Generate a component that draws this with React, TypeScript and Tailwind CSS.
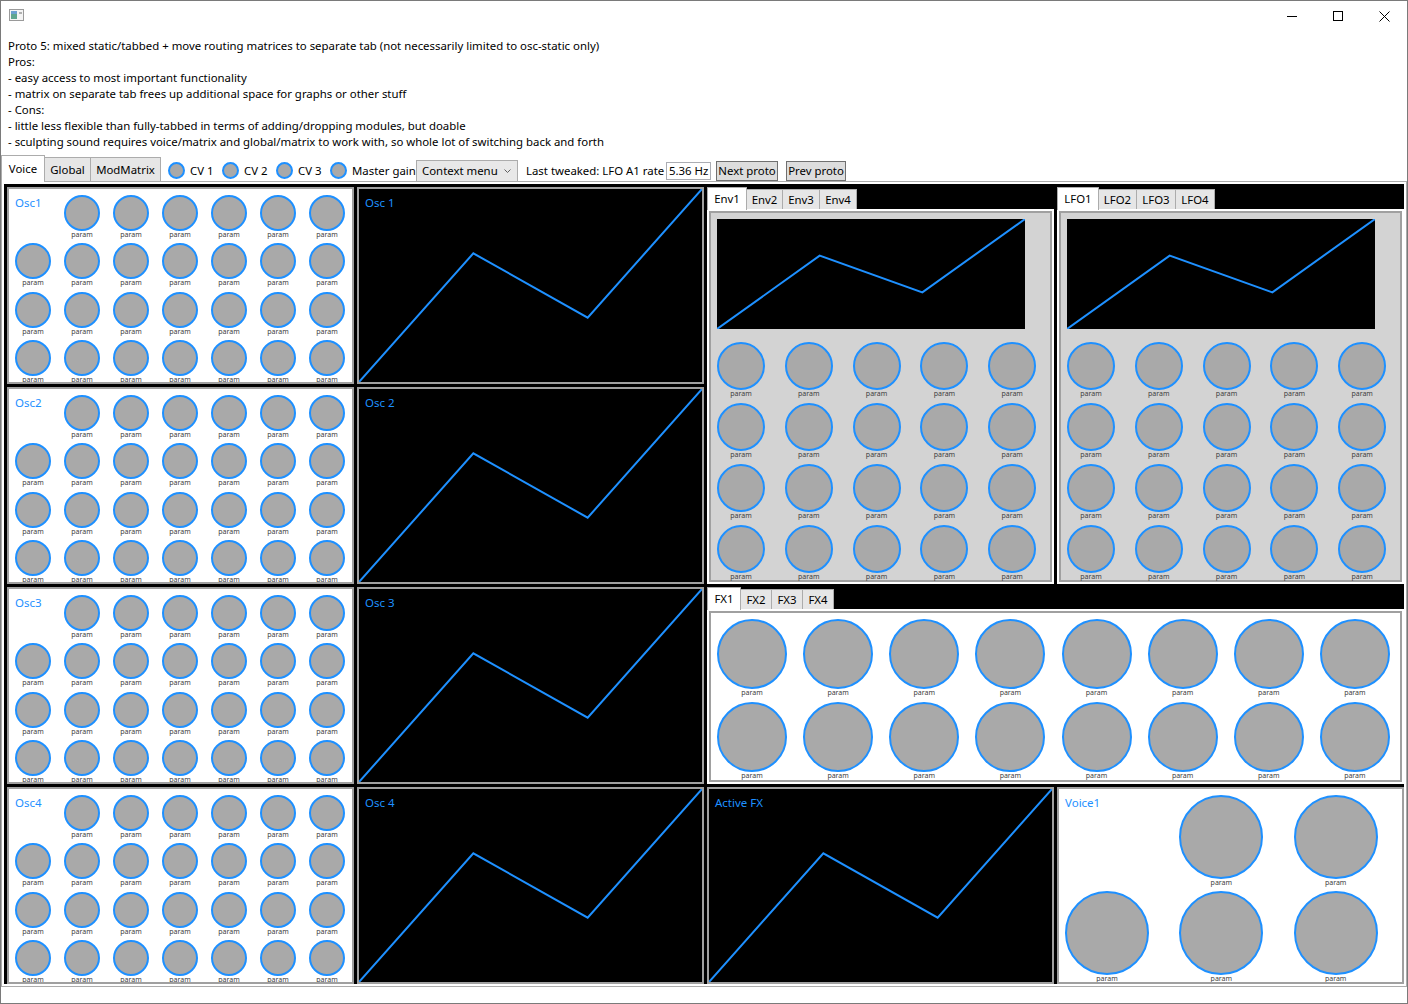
import React from "react";

type KS = "s" | "m" | "l" | "xl";

function Knob({ size }: { size: KS }) {
  const cls =
    size === "s"
      ? "w-[36px] h-[36px]"
      : size === "m"
      ? "w-[48px] h-[48px]"
      : size === "l"
      ? "w-[70px] h-[70px]"
      : "w-[84px] h-[84px]";
  return (
    <div className="flex pl-[6px] pt-[6px] min-w-0 min-h-0">
      <div className="flex flex-col items-center">
        <div className={`${cls} shrink-0 rounded-full border-2 border-[#1e90ff] bg-[#a9a9a9]`} />
        <span className="h-[7px] text-[7px] leading-[7px] text-[#404040]">param</span>
      </div>
    </div>
  );
}

function Line() {
  return (
    <svg className="absolute inset-0 h-full w-full" viewBox="0 0 300 300" preserveAspectRatio="none">
      <polyline
        points="0,300 100,100 200,200 300,0"
        fill="none"
        stroke="#1e90ff"
        strokeWidth="2"
        vectorEffect="non-scaling-stroke"
      />
    </svg>
  );
}

function Graph({ label, className = "" }: { label: string; className?: string }) {
  return (
    <div className={`relative overflow-hidden border-2 border-[#a0a0a0] bg-black ${className}`}>
      <Line />
      <span className="absolute left-[6px] top-[6px] text-[11.5px] leading-4 text-[#1e90ff]">{label}</span>
    </div>
  );
}

function OscPanel({ label }: { label: string }) {
  const cells = Array.from({ length: 27 });
  return (
    <div className="grid grid-cols-7 grid-rows-4 overflow-hidden border-2 border-[#a0a0a0] bg-white">
      <div className="pl-[6px] pt-[6px] text-[11.5px] leading-4 text-[#1e90ff]">{label}</div>
      {cells.map((_, i) => (
        <Knob key={i} size="s" />
      ))}
    </div>
  );
}

function InnerTab({ label, w, sel }: { label: string; w: string; sel?: boolean }) {
  return sel ? (
    <div
      className={`${w} relative z-10 mb-[-1px] flex h-[23px] items-center justify-center border border-b-0 border-[#acacac] bg-white text-black`}
    >
      {label}
    </div>
  ) : (
    <div
      className={`${w} -ml-px flex h-[20px] items-center justify-center border border-b-0 border-[#acacac] bg-[#e6e6e6] text-black`}
    >
      {label}
    </div>
  );
}

function EnvPanel({ tabs, widths }: { tabs: string[]; widths: string[] }) {
  return (
    <div className="row-span-2 flex flex-col bg-black">
      <div className="flex h-[22px] items-end">
        {tabs.map((t, i) => (
          <InnerTab key={t} label={t} w={widths[i]} sel={i === 0} />
        ))}
      </div>
      <div className="flex-1 bg-white p-[2px]">
        <div className="flex h-full flex-col border-2 border-[#a0a0a0] bg-[#d3d3d3]">
          <div className="relative ml-[6px] mt-[6px] h-[110px] w-[308px] shrink-0 bg-black">
            <Line />
          </div>
          <div className="mt-[7px] grid grid-cols-5 grid-rows-[61px_61px_61px_61px]">
            {Array.from({ length: 20 }).map((_, i) => (
              <Knob key={i} size="m" />
            ))}
          </div>
        </div>
      </div>
    </div>
  );
}

function FxPanel() {
  const tabs = ["FX1", "FX2", "FX3", "FX4"];
  const widths = ["w-[34px]", "w-[32px]", "w-[32px]", "w-[32px]"];
  return (
    <div className="col-span-2 flex flex-col bg-black">
      <div className="flex h-[22px] items-end">
        {tabs.map((t, i) => (
          <InnerTab key={t} label={t} w={widths[i]} sel={i === 0} />
        ))}
      </div>
      <div className="flex-1 bg-white p-[2px]">
        <div className="grid h-full grid-cols-8 grid-rows-[83px_83px] border-2 border-[#a0a0a0] bg-white">
          {Array.from({ length: 16 }).map((_, i) => (
            <Knob key={i} size="l" />
          ))}
        </div>
      </div>
    </div>
  );
}

function VoicePanel() {
  return (
    <div className="grid grid-cols-3 grid-rows-[96px_96px] overflow-hidden border-2 border-[#a0a0a0] bg-white">
      <div className="pl-[6px] pt-[6px] text-[11.5px] leading-4 text-[#1e90ff]">Voice1</div>
      {Array.from({ length: 5 }).map((_, i) => (
        <Knob key={i} size="xl" />
      ))}
    </div>
  );
}

function MiniKnob() {
  return <div className="h-[17px] w-[17px] shrink-0 rounded-full border-2 border-[#1e90ff] bg-[#a9a9a9]" />;
}

export default function App() {
  const lines = [
    "Proto 5: mixed static/tabbed + move routing matrices to separate tab (not necessarily limited to osc-static only)",
    "Pros:",
    "- easy access to most important functionality",
    "- matrix on separate tab frees up additional space for graphs or other stuff",
    "- Cons:",
    "- little less flexible than fully-tabbed in terms of adding/dropping modules, but doable",
    "- sculpting sound requires voice/matrix and global/matrix to work with, so whole lot of switching back and forth",
  ];
  return (
    <div className="flex h-[1004px] w-[1408px] flex-col overflow-hidden border border-[#7a7a7a] bg-white font-['Noto_Sans','Liberation_Sans',sans-serif] text-[11.4px] text-black">
      {/* title bar */}
      <div className="flex h-[30px] shrink-0 items-start">
        <div className="ml-[8px] mt-[8px]">
          <svg width="15" height="12" viewBox="0 0 15 12">
            <rect x="0.5" y="0.5" width="14" height="11" fill="#f4f4f4" stroke="#9a9a9a" />
            <rect x="2" y="2" width="6" height="8" fill="#5fa58f" />
            <rect x="2" y="2" width="6" height="3" fill="#6b9fd0" />
            <rect x="10" y="3" width="3" height="2" fill="#b0b0b0" />
          </svg>
        </div>
        <div className="ml-auto flex h-[30px]">
          <div className="flex w-[46px] items-center justify-center">
            <svg width="10" height="10" viewBox="0 0 10 10">
              <line x1="0" y1="5.5" x2="10" y2="5.5" stroke="#000" strokeWidth="1" />
            </svg>
          </div>
          <div className="flex w-[46px] items-center justify-center">
            <svg width="10" height="10" viewBox="0 0 10 10">
              <rect x="0.5" y="0.5" width="9" height="9" fill="none" stroke="#000" strokeWidth="1" />
            </svg>
          </div>
          <div className="flex w-[46px] items-center justify-center">
            <svg width="11" height="11" viewBox="0 0 11 11">
              <line x1="0.5" y1="0.5" x2="10.5" y2="10.5" stroke="#000" strokeWidth="1" />
              <line x1="10.5" y1="0.5" x2="0.5" y2="10.5" stroke="#000" strokeWidth="1" />
            </svg>
          </div>
        </div>
      </div>

      {/* description */}
      <div className="shrink-0 pl-[7px] pt-[7px] leading-4">
        {lines.map((l) => (
          <div key={l} className="whitespace-pre">
            {l}
          </div>
        ))}
      </div>

      {/* toolbar */}
      <div className="mt-[5px] flex h-[26px] shrink-0 items-end whitespace-nowrap">
        <div className="relative z-10 mb-[-1px] flex h-[27px] w-[44px] items-center justify-center border border-b-0 border-[#acacac] bg-white">
          Voice
        </div>
        <div className="flex h-[24px] w-[46px] items-center justify-center border border-b-0 border-l-0 border-[#acacac] bg-[#e6e6e6]">
          Global
        </div>
        <div className="flex h-[24px] w-[70px] items-center justify-center border border-b-0 border-l-0 border-[#acacac] bg-[#e6e6e6]">
          ModMatrix
        </div>
        <div className="relative z-10 mb-[-1px] flex h-[22px] items-center pl-[7px]">
          <div className="flex w-[54px] items-center">
            <MiniKnob />
            <span className="ml-[5px]">CV 1</span>
          </div>
          <div className="flex w-[54px] items-center">
            <MiniKnob />
            <span className="ml-[5px]">CV 2</span>
          </div>
          <div className="flex w-[54px] items-center">
            <MiniKnob />
            <span className="ml-[5px]">CV 3</span>
          </div>
          <div className="flex w-[86px] items-center">
            <MiniKnob />
            <span className="ml-[5px]">Master gain</span>
          </div>
          <div className="flex h-[22px] w-[102px] items-center justify-between border border-[#acacac] bg-[#e8e8e8] pl-[5px] pr-[6px]">
            <span>Context menu</span>
            <svg width="7" height="4" viewBox="0 0 7 4">
              <polyline points="0.5,0.5 3.5,3.5 6.5,0.5" fill="none" stroke="#606060" strokeWidth="1" />
            </svg>
          </div>
          <div className="ml-[8px] w-[140px]">Last tweaked: LFO A1 rate</div>
          <div className="flex h-[18px] w-[45px] items-center border border-[#abadb3] bg-white pl-[2px]">5.36 Hz</div>
          <div className="ml-[5px] flex h-[20px] w-[62px] items-center justify-center border border-[#707070] bg-[#dddddd]">
            Next proto
          </div>
          <div className="ml-[8px] flex h-[20px] w-[60px] items-center justify-center border border-[#707070] bg-[#dddddd]">
            Prev proto
          </div>
        </div>
      </div>

      {/* tab content */}
      <div className="w-[1406px] shrink-0 border border-[#acacac] bg-white p-[2px]">
        <div className="grid h-[800px] grid-cols-[347px_347px_347px_347px] grid-rows-[197px_197px_197px_197px] gap-[3px] bg-black pl-[3px] pt-[3px]">
          <OscPanel label="Osc1" />
          <Graph label="Osc 1" />
          <EnvPanel tabs={["Env1", "Env2", "Env3", "Env4"]} widths={["w-[40px]", "w-[37px]", "w-[38px]", "w-[38px]"]} />
          <EnvPanel tabs={["LFO1", "LFO2", "LFO3", "LFO4"]} widths={["w-[42px]", "w-[39px]", "w-[40px]", "w-[40px]"]} />
          <OscPanel label="Osc2" />
          <Graph label="Osc 2" />
          <OscPanel label="Osc3" />
          <Graph label="Osc 3" />
          <FxPanel />
          <OscPanel label="Osc4" />
          <Graph label="Osc 4" />
          <Graph label="Active FX" />
          <VoicePanel />
        </div>
      </div>
    </div>
  );
}
